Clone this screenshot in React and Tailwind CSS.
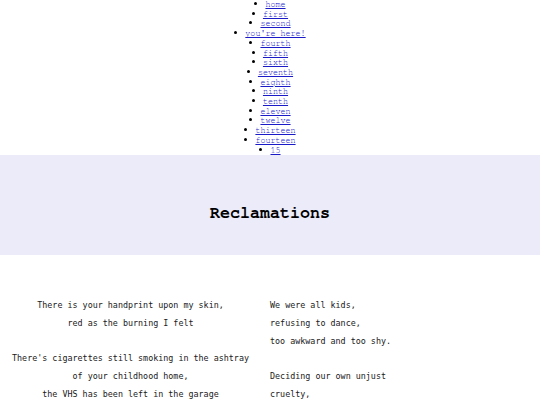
import React from "react";

const navItems = [
  "home",
  "first",
  "second",
  "you're here!",
  "fourth",
  "fifth",
  "sixth",
  "seventh",
  "eighth",
  "ninth",
  "tenth",
  "eleven",
  "twelve",
  "thirteen",
  "fourteen",
  "15",
];

const leftPoem = [
  ["There is your handprint upon my skin,", "red as the burning I felt"],
  [
    "There's cigarettes still smoking in the ashtray",
    "of your childhood home,",
    "the VHS has been left in the garage",
  ],
];

const rightPoem = [
  ["We were all kids,", "refusing to dance,", "too awkward and too shy."],
  ["Deciding our own unjust", "cruelty,"],
];

const Stanzas = ({ stanzas }) => (
  <div className="flex flex-col gap-[17px]">
    {stanzas.map((lines, i) => (
      <p key={i}>
        {lines.map((line) => (
          <span key={line} className="block leading-[18px]">
            {line}
          </span>
        ))}
      </p>
    ))}
  </div>
);

export default function App() {
  return (
    <div className="min-h-screen bg-white text-black">
      {/* Nav list */}
      <ul className="text-center font-['Nimbus_Mono_PS','FreeMono','Courier',monospace] text-[8.4px] leading-[9.7px]">
        {navItems.map((item) => (
          <li key={item}>
            <span className="mr-[8px] inline-block h-[3px] w-[3px] translate-y-[-2px] rounded-full bg-black" />
            <a href="#" className="text-[#1a1ac8] underline">
              {item}
            </a>
          </li>
        ))}
      </ul>

      {/* Header band */}
      <header className="h-[100px] bg-[#ebebfa] pt-[49px] text-center">
        <h1 className="font-['Nimbus_Mono_PS','FreeMono','Courier',monospace] text-[16.7px] font-bold leading-[19px]">
          Reclamations
        </h1>
      </header>

      {/* Poem */}
      <main className="flex pt-[41px] font-['DejaVu_Sans_Mono',monospace] text-[8.4px] text-[#1a1a1a]">
        <div className="w-[261px] text-center">
          <Stanzas stanzas={leftPoem} />
        </div>
        <div className="ml-[9px] text-left">
          <Stanzas stanzas={rightPoem} />
        </div>
      </main>
    </div>
  );
}
